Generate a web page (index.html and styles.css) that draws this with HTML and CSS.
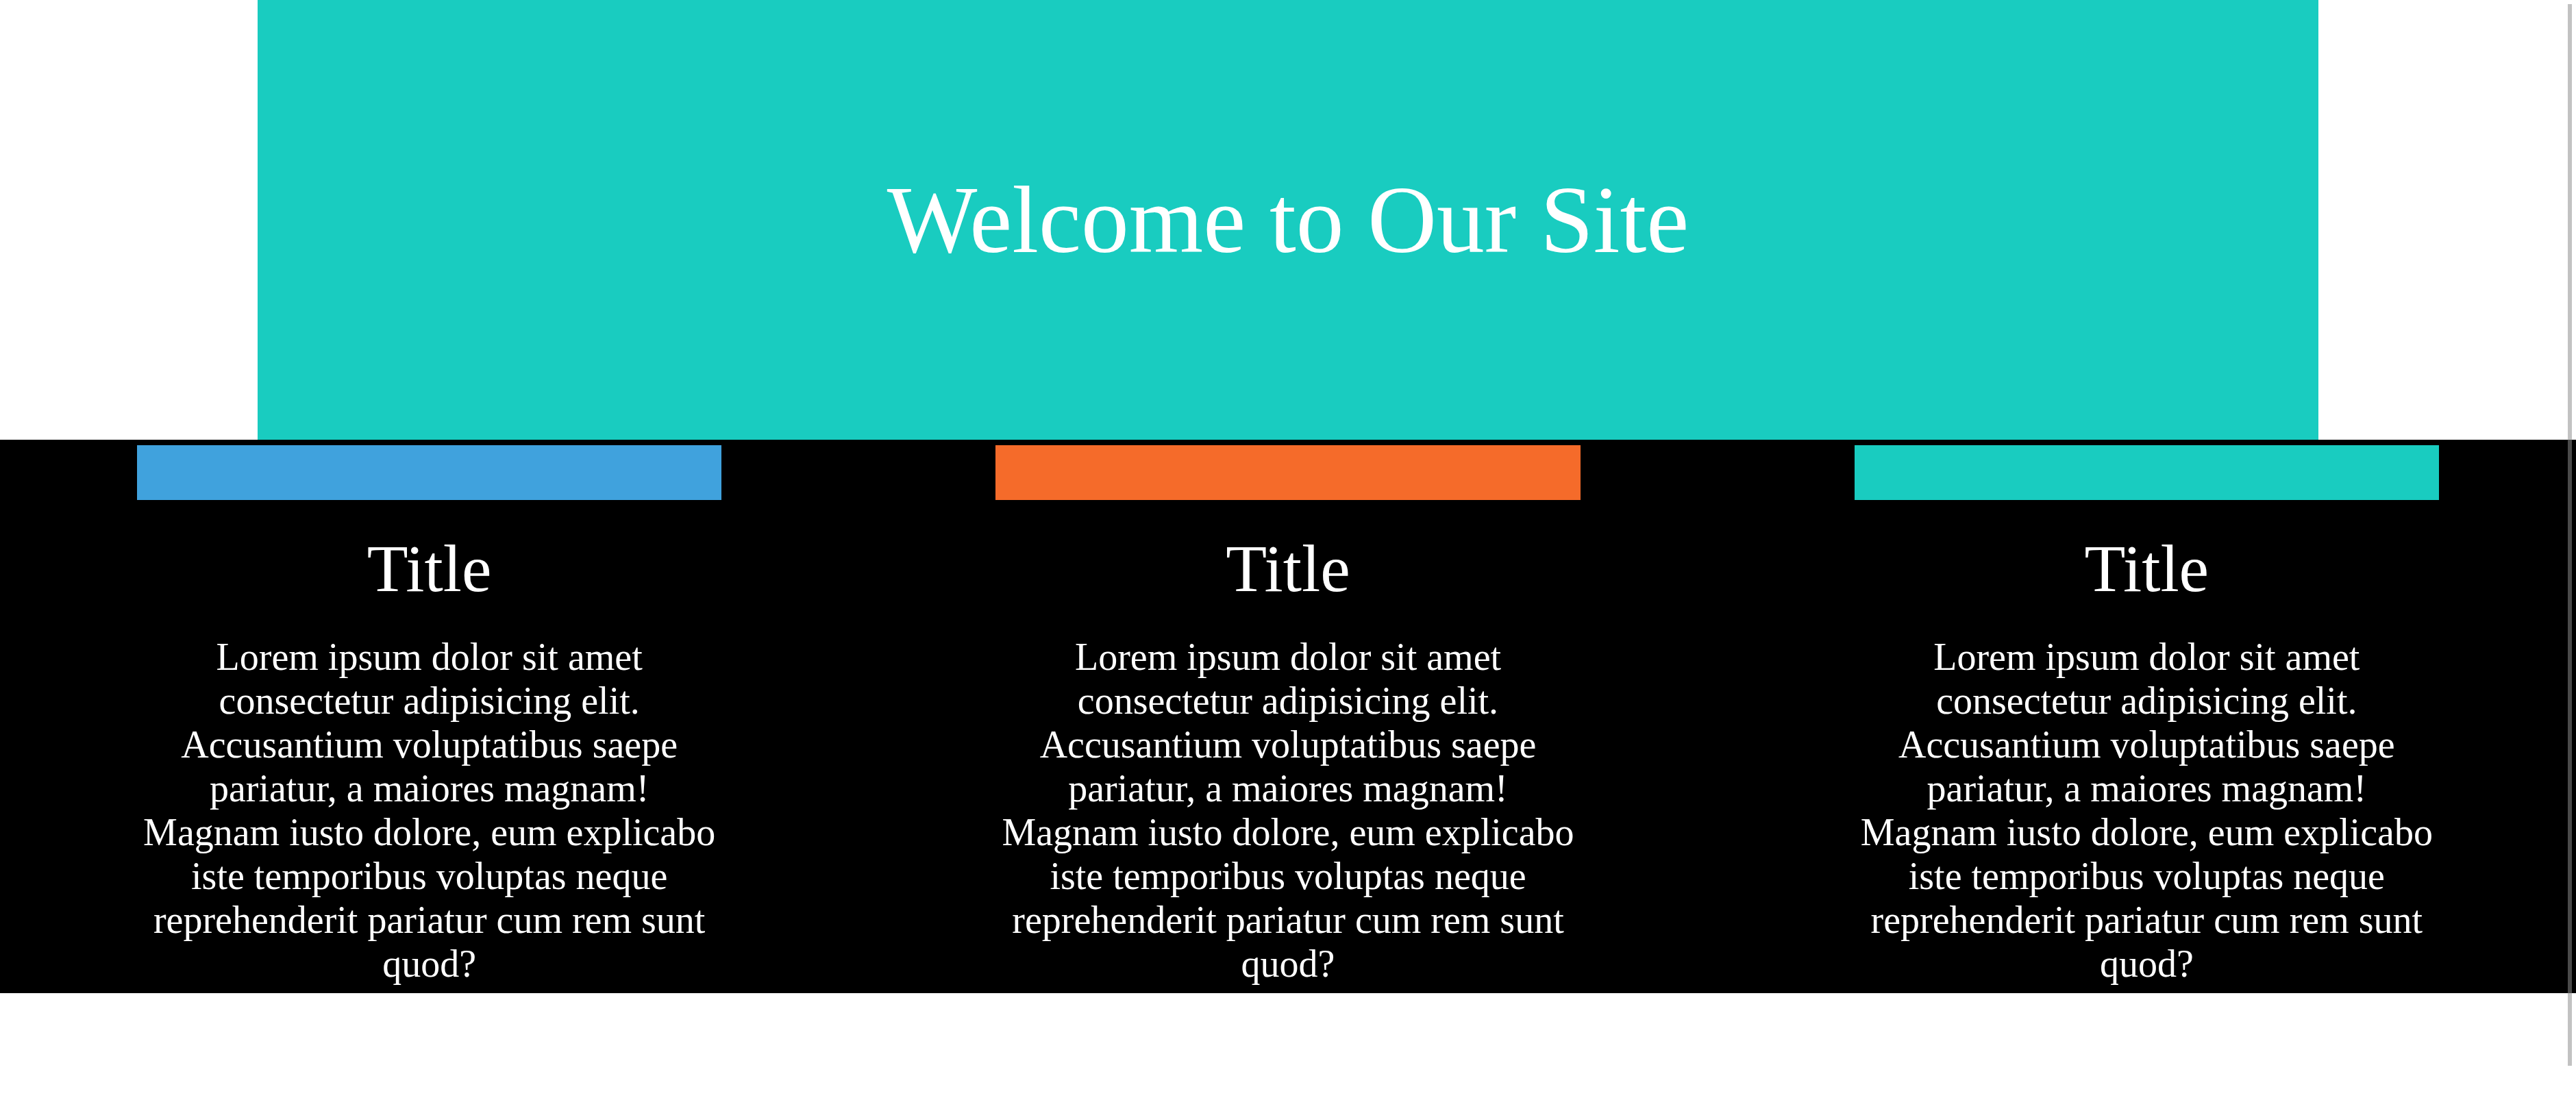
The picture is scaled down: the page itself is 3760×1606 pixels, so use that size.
FILE: index.html
```html
<!DOCTYPE html>
<html lang="en">
<head>
<meta charset="utf-8">
<title>Welcome to Our Site</title>
<link rel="stylesheet" href="styles.css">
</head>
<body>
<header class="hero">
  <h1 class="hero-title">Welcome to Our Site</h1>
</header>
<section class="features">
  <article class="card">
    <div class="bar bar-blue"></div>
    <h2 class="card-title">Title</h2>
    <p class="card-text">Lorem ipsum dolor sit amet consectetur adipisicing elit. Accusantium voluptatibus saepe pariatur, a maiores magnam! Magnam iusto dolore, eum explicabo iste temporibus voluptas neque reprehenderit pariatur cum rem sunt quod?</p>
  </article>
  <article class="card">
    <div class="bar bar-orange"></div>
    <h2 class="card-title">Title</h2>
    <p class="card-text">Lorem ipsum dolor sit amet consectetur adipisicing elit. Accusantium voluptatibus saepe pariatur, a maiores magnam! Magnam iusto dolore, eum explicabo iste temporibus voluptas neque reprehenderit pariatur cum rem sunt quod?</p>
  </article>
  <article class="card">
    <div class="bar bar-teal"></div>
    <h2 class="card-title">Title</h2>
    <p class="card-text">Lorem ipsum dolor sit amet consectetur adipisicing elit. Accusantium voluptatibus saepe pariatur, a maiores magnam! Magnam iusto dolore, eum explicabo iste temporibus voluptas neque reprehenderit pariatur cum rem sunt quod?</p>
  </article>
</section>
<div class="scroll-thumb"></div>
</body>
</html>
```
FILE: styles.css
```css
html, body {
  margin: 0;
  padding: 0;
  background: #ffffff;
  overflow: hidden;
}

body {
  font-family: "Liberation Serif", "Times New Roman", serif;
  color: #ffffff;
}

.hero {
  width: 80%;
  height: 642px;
  margin: 0 auto;
  background: #19ccc0;
  display: flex;
  align-items: center;
  justify-content: center;
}

.hero-title {
  margin: 0;
  font-size: 139.5px;
  font-weight: normal;
  line-height: normal;
}

.features {
  display: grid;
  grid-template-columns: repeat(3, 1fr);
  background: #000000;
  padding: 8px 0 11px;
}

.card {
  padding: 0 200px;
  text-align: center;
}

.bar {
  height: 80px;
}

.bar-blue { background: #40a2dd; }
.bar-orange { background: #f56b2a; }
.bar-teal { background: #19ccc0; }

.card-title {
  margin: 44px 0 0;
  font-size: 98px;
  font-weight: normal;
  line-height: normal;
}

.card-text {
  margin: 41px 0 0;
  font-size: 56px;
  line-height: normal;
}

.scroll-thumb {
  position: fixed;
  top: 6px;
  right: 6px;
  width: 6px;
  height: 1550px;
  background: rgba(139, 139, 139, 0.53);
}
```
